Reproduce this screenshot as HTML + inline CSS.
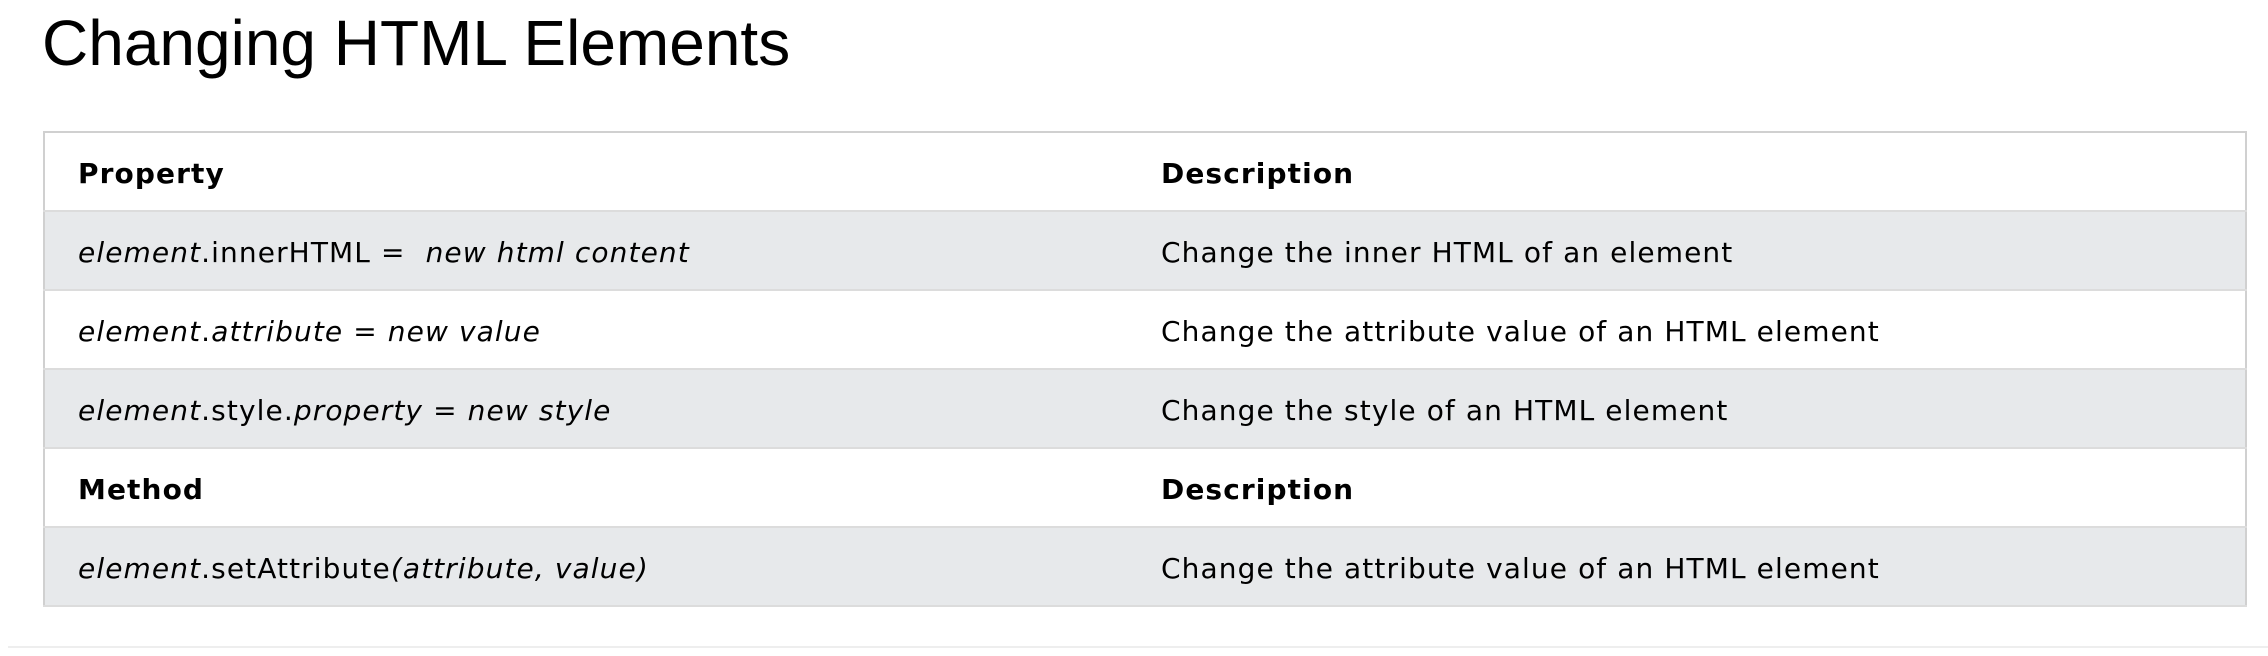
<!DOCTYPE html>
<html><head><meta charset="utf-8">
<style>
html,body{margin:0;padding:0;background:#fff;width:2268px;height:656px;overflow:hidden;}
body{font-family:"DejaVu Sans","Liberation Sans",sans-serif;color:#000;position:relative;}
h1{position:absolute;left:42px;top:3px;margin:0;font-family:"Liberation Sans",Arial,sans-serif;font-weight:normal;font-size:64px;line-height:80px;}
table{position:absolute;left:43px;top:131px;width:2204px;border-collapse:collapse;border:2px solid #d0d0d0;border-bottom:none;font-size:28px;letter-spacing:1.1px;}
td,th{height:74px;padding:3px 0 0 33px;text-align:left;vertical-align:middle;border-bottom:2px solid #dcdcdc;}
th{font-weight:bold;}
tr.g{background:#e7e9eb;}
td.c2,th.c2{width:1084px;}
.hr{position:absolute;left:8px;right:0;top:646px;height:2px;background:#eeeeee;}
</style></head><body>
<h1>Changing HTML Elements</h1>
<table>
<tr><th>Property</th><th class="c2">Description</th></tr>
<tr class="g"><td><i>element</i>.innerHTML = &nbsp;<i>new html content</i></td><td class="c2">Change the inner HTML of an element</td></tr>
<tr><td><i>element</i>.<i>attribute = new value</i></td><td class="c2">Change the attribute value of an HTML element</td></tr>
<tr class="g"><td><i>element</i>.style.<i>property</i> = <i>new style</i></td><td class="c2">Change the style of an HTML element</td></tr>
<tr><th>Method</th><th class="c2">Description</th></tr>
<tr class="g"><td><i>element</i>.setAttribute<i>(attribute, value)</i></td><td class="c2">Change the attribute value of an HTML element</td></tr>
</table>
<div class="hr"></div>
</body></html>
